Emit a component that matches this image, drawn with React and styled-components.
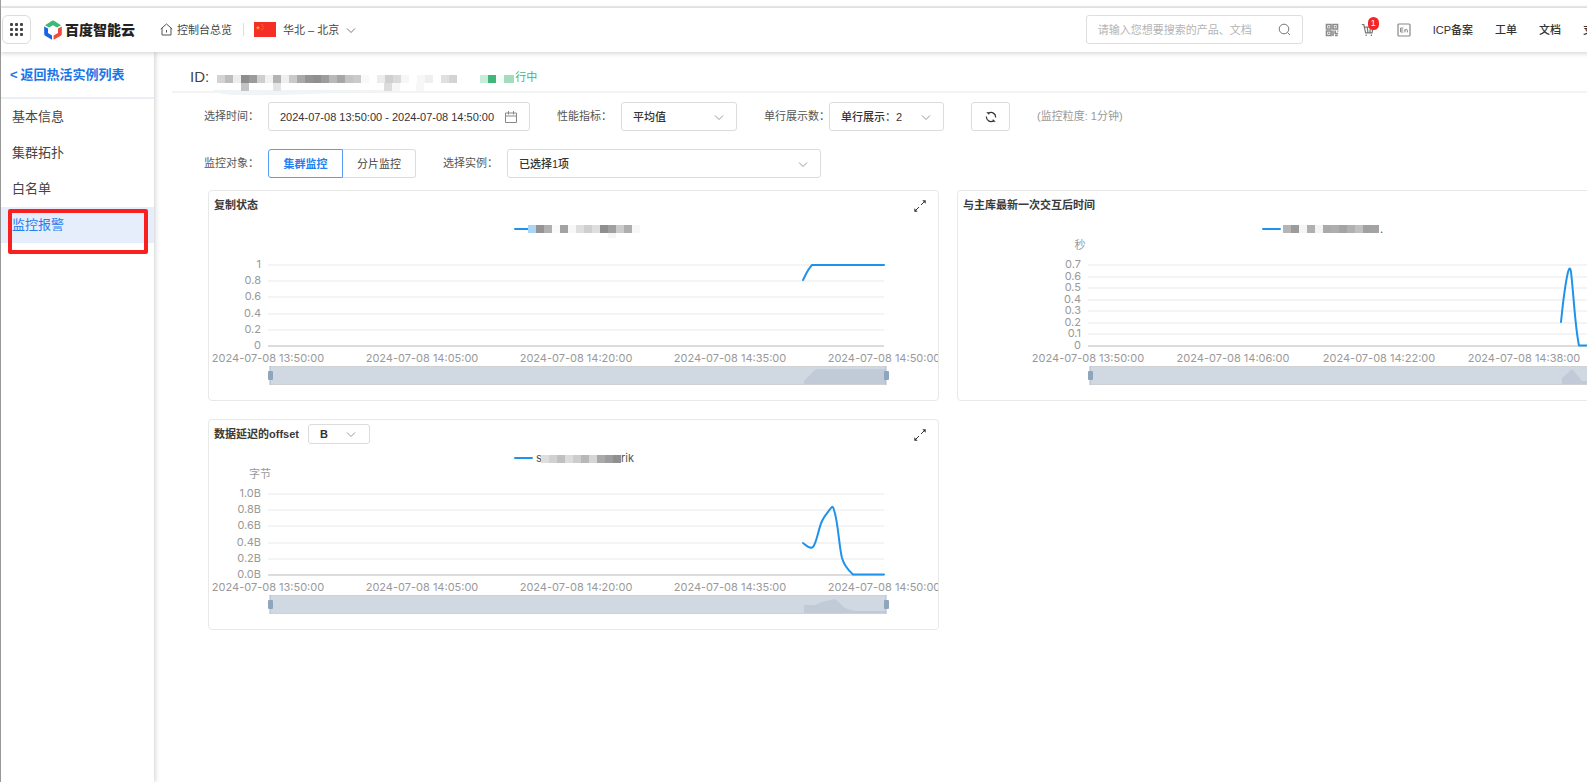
import React from "react";
import styled, { createGlobalStyle } from "styled-components";

const GlobalStyle = createGlobalStyle`
  *, *::before, *::after { box-sizing: border-box; }
  body {
    margin: 0;
    background: #fff;
    overflow-x: hidden;
    color: #444;
    font: 11px/16px "Liberation Sans", "Noto Sans CJK SC", sans-serif;
  }
  button, input, select { font: inherit; color: inherit; margin: 0; }
  a { color: inherit; text-decoration: none; }
`;

const Clip = styled.div`
  overflow: hidden;
`;

const Page = styled.div`
  display: flex;
  flex-direction: column;
  min-width: 1742px;
  min-height: 100vh;
  border-left: 1px solid #a0a0a0;
`;

const TopStrip = styled.div`
  height: 8px;
  border-bottom: 2px solid #ededed;
`;

const Header = styled.header`
  position: relative;
  z-index: 2;
  display: flex;
  align-items: center;
  height: 44px;
  padding: 0 137px 1px 1px;
  background: #fff;
  box-shadow: 0 1px 5px rgba(0, 0, 0, 0.2);
`;

const AppsButton = styled.button`
  display: grid;
  place-items: center;
  width: 29px;
  height: 29px;
  padding: 0;
  border: 1px solid #dcdcdc;
  border-radius: 6px;
  background: #fff;
`;

const Brand = styled.a`
  display: flex;
  align-items: center;
  gap: 2px;
  margin-left: 12px;
  color: #222;
  font-size: 14px;
  font-weight: 900;
`;

const HomeLink = styled.a`
  display: flex;
  align-items: center;
  gap: 4px;
  margin-left: 25px;
`;

const Divider = styled.span`
  width: 1px;
  height: 13px;
  margin: 0 10px 0 11px;
  background: #ddd;
`;

const RegionButton = styled.button`
  display: flex;
  align-items: center;
  gap: 7px;
  padding: 0;
  border: 0;
  background: none;
`;

const HeaderRight = styled.nav`
  display: flex;
  align-items: center;
  gap: 22px;
  margin-left: auto;
  color: #333;
  font-weight: 500;
`;

const SearchBox = styled.label`
  display: flex;
  align-items: center;
  width: 217px;
  height: 29px;
  padding: 0 11px;
  border: 1px solid #dedede;
  border-radius: 3px;
  font-weight: 400;
  input {
    flex: 1;
    min-width: 0;
    padding: 0;
    border: 0;
    outline: 0;
    background: none;
  }
  input::placeholder { color: #b4b4b4; opacity: 1; }
`;

const IconLink = styled.a`
  position: relative;
  display: flex;
  width: 14px;
  height: 14px;
`;

const Badge = styled.span`
  position: absolute;
  top: -6px;
  right: -4px;
  width: 11px;
  height: 13px;
  border-radius: 6px;
  background: #f32525;
  color: #fff;
  font-size: 9px;
  line-height: 13px;
  text-align: center;
`;

const Body = styled.div`
  display: flex;
  flex: 1;
`;

const Sidebar = styled.aside`
  position: relative;
  z-index: 1;
  width: 153px;
  box-shadow: 1px 0 5px rgba(0, 0, 0, 0.2);
  font-size: 13px;
  line-height: 20px;
`;

const BackLink = styled.a`
  display: flex;
  align-items: center;
  gap: 3px;
  height: 47px;
  padding-left: 9px;
  border-bottom: 2px solid #ebeef4;
  color: #1a75e8;
  font-weight: 700;
`;

const MenuItem = styled.a`
  display: flex;
  align-items: center;
  height: 36px;
  padding-left: 11px;
  background: ${(p) => (p.$active ? "#e6edfb" : "transparent")};
  color: ${(p) => (p.$active ? "#1f80f0" : "#444")};
`;

const MenuSlot = styled.div`
  position: relative;
`;

const Highlight = styled.span`
  position: absolute;
  top: 2px;
  left: 7px;
  width: 140px;
  height: 45px;
  border: 4px solid #fb2020;
  border-radius: 2px;
`;

const Main = styled.main`
  flex: 1;
  min-width: 0;
`;

const TitleBar = styled.div`
  display: flex;
  align-items: center;
  height: 41px;
  margin-left: 18px;
  padding: 10px 0 0 18px;
  border-bottom: 2px solid #f3f3f3;
  font-size: 15px;
`;

const Status = styled.span`
  color: #41b57a;
  font-size: 11px;
`;

const Controls = styled.div`
  display: flex;
  flex-direction: column;
  gap: 18px;
  padding: 9px 0 0 50px;
`;

const ControlRow = styled.div`
  display: flex;
  align-items: center;
  gap: 27px;
  height: 29px;
`;

const Field = styled.div`
  display: flex;
  align-items: center;
`;

const FieldLabel = styled.label`
  width: ${(p) => p.$width || 64}px;
  padding-bottom: 2px;
  white-space: nowrap;
  color: #555;
`;

const Control = styled.div`
  display: flex;
  align-items: center;
  width: ${(p) => p.$width}px;
  height: ${(p) => (p.$small ? 20 : 29)}px;
  border: 1px solid #dcdcdc;
  border-radius: 3px;
  background: #fff;
  color: #333;
  font-weight: ${(p) => (p.$small ? 700 : 500)};
  input, select {
    flex: 1;
    min-width: 0;
    height: 100%;
    padding: 0 0 0 11px;
    border: 0;
    outline: 0;
    background: none;
    appearance: none;
  }
  svg { flex: none; margin-right: ${(p) => (p.$small ? 13 : 12)}px; }
`;

const Segments = styled.div`
  display: flex;
`;

const Segment = styled.button`
  width: ${(p) => (p.$active ? 75 : 73)}px;
  height: 29px;
  padding: 0;
  border: 1px solid ${(p) => (p.$active ? "#5a9bf5" : "#dcdcdc")};
  border-left-width: ${(p) => (p.$active ? 1 : 0)}px;
  border-radius: ${(p) => (p.$active ? "3px 0 0 3px" : "0 3px 3px 0")};
  background: #fff;
  color: ${(p) => (p.$active ? "#1f80f0" : "#444")};
  font-weight: ${(p) => (p.$active ? 700 : 400)};
`;

const RefreshButton = styled.button`
  display: grid;
  place-items: center;
  width: 39px;
  height: 29px;
  padding: 0;
  border: 1px solid #dcdcdc;
  border-radius: 3px;
  background: #fff;
`;

const Hint = styled.span`
  padding-bottom: 2px;
  color: #999;
`;

const Cards = styled.section`
  display: grid;
  grid-template-columns: 1fr 1fr;
  gap: 18px;
  padding: 12px 54px 40px;
`;

const Card = styled.article`
  min-width: 0;
  border: 1px solid #e8e8e8;
  border-radius: 4px;
`;

const CardHead = styled.div`
  display: flex;
  align-items: center;
  gap: 9px;
  height: 28px;
  padding: 0 12px 0 5px;
`;

const CardTitle = styled.h2`
  margin: 0;
  color: #3a3a3a;
  font-size: 11px;
  font-weight: 700;
`;

const ExpandButton = styled.button`
  display: flex;
  margin-left: auto;
  padding: 2px 0 0;
  border: 0;
  background: none;
`;

const ChartSvg = styled.svg`
  display: block;
  width: 100%;
  height: auto;
  font-family: Inter, "Noto Sans CJK SC", sans-serif;
  font-size: 11px;
  fill: #999;
`;

const Blocks = styled.svg`
  display: block;
  overflow: visible;
`;

const Chevron = ({ color = "#999" }) => (
  <svg width="10" height="10" viewBox="0 0 10 10" fill="none" stroke={color}>
    <path d="M1 3.5 5 7.5 9 3.5" />
  </svg>
);

const HexLogo = () => (
  <svg width="20" height="20" viewBox="0 0 20 20">
    <path d="M2 5.2 9 .8Q10 .3 11 .8L18 5.2 14 7.6 10 5.2 6 7.6Z" fill="#3cb878" />
    <path d="M1.2 6.5 5 8.5V13L9 15.4V19.8L2.2 15.8Q1.2 15.2 1.2 14Z" fill="#1664e8" />
    <path d="M18.8 6.5 15 8.5V13L10.6 15.4V19.8L17.8 15.8Q18.8 15.2 18.8 14Z" fill="#f04a3a" />
  </svg>
);

const Flag = () => (
  <svg width="22" height="15" viewBox="0 0 22 15">
    <rect width="22" height="15" fill="#f52f26" />
    <path d="M4 3.2 4.6 4.9H6.4L5 6 5.5 7.7 4 6.7 2.5 7.7 3 6 1.6 4.9H3.4Z" fill="#f9a825" />
    <path d="M7.5 2.2h1v1h-1zM8.6 3.8h1v1h-1zM8.6 5.8h1v1h-1zM7.5 7.2h1v1h-1z" fill="#f6822a" />
  </svg>
);

const QrIcon = () => (
  <svg width="14" height="14" viewBox="0 0 14 14" fill="none" stroke="#8a8a8a">
    <path d="M1.5 1.5h4.5v4.5H1.5zM1.5 8h4.5v4.5H1.5zM8 1.5h4.5v4.5H8zM3 3.7h1.6M3 10.2h1.6M9.5 3.7h1.6M8 7.5v5.5M10.2 7.5v3h3M12.8 12.5H10M12.7 7.5v1" strokeWidth="1.6" />
  </svg>
);

const CartIcon = () => (
  <svg width="14" height="14" viewBox="0 0 14 14" fill="none" stroke="#777" strokeWidth="1.2">
    <path d="M.8 1.5H2.8L4.6 9.8H11L12.2 4.2H3.5M5.2 13V11.5M10.4 13V11.5M6.3 4.2 6.9 9.6M9.4 4.2 8.9 9.6" />
  </svg>
);

const EnIcon = () => (
  <svg width="14" height="14" viewBox="0 0 14 14" fill="none" stroke="#888">
    <rect x="1" y="1" width="12" height="12" rx="1" strokeWidth="1.2" />
    <path d="M6.4 5H3.6V9H6.4M3.6 7H6.2M8 9.4V6.2M8 7.6Q8.3 6.4 9.3 6.4 10.4 6.4 10.4 7.6V9.4" />
  </svg>
);

const ExpandIcon = () => (
  <svg width="12" height="12" viewBox="0 0 12 12" stroke="#333" fill="#333">
    <path d="M1 11 5 7M7 5 11 1" />
    <path d="M.3 8.3V11.7H3.7ZM8.3.3H11.7V3.7Z" stroke="none" />
  </svg>
);

/* Censored text: each entry is [x, y, width, height, colour]. */
const Mosaic = ({ cells }) =>
  cells.map(([x, y, w, h, c], i) => (
    <rect key={i} x={x} y={y} width={w} height={h} fill={c} shapeRendering="crispEdges" />
  ));

const row = (x, y, size, colors) => colors.map((c, i) => [x + i * size, y, size, size, c]);

const idCells = [
  ...row(8, 11, 8, ["#d3d3d3", "#bdbdbd", "#ededed", "#8d8d8d", "#9b9b9b", "#cfcfcf", "#f2f2f2", "#b3b3b3", "#efefef", "#c9c9c9", "#a9a9a9", "#949494", "#8f8f8f", "#9c9c9c", "#b8b8b8", "#a6a6a6", "#c4c4c4", "#cacaca", "#f9f9f9", "#ffffff", "#ececec", "#cfcfcf", "#dadada", "#f6f6f6", "#fff", "#f7f7f7", "#efefef", "#fff", "#e0e0e0", "#d3d3d3"]),
  [32, 19, 8, 8, "#c4c4c4"],
  [64, 19, 8, 8, "#e4e4e4"],
  [175, 19, 8, 8, "#dcdcdc"],
  [183, 19, 8, 8, "#f6f6f6"],
  [207, 19, 8, 8, "#f7f7f7"],
  [271, 11, 8, 8, "#c9ecd9"],
  [279, 11, 8, 8, "#41b57a"],
  [287, 11, 8, 8, "#f7fcf9"],
  [295, 11, 10, 8, "#a5dcc0"],
];

function Chart({ left, ticks, unit, unitX, times, curve, shade, legendX, legendWidth = 18, cells, before, after, afterX }) {
  const right = 675;
  const top = 45;
  const bottom = 126;
  const span = bottom - top;
  return (
    <ChartSvg viewBox="0 -1 729 181">
      <path d={`M${legendX} 9h${legendWidth}`} stroke="#1f93ec" strokeWidth="2" strokeLinecap="round" />
      {before && <text x="327" y="13" fill="#555">{before}</text>}
      <Mosaic cells={cells} />
      {after && <text x={afterX} y="13" fill="#555">{after}</text>}
      {unit && <text x={unitX} y="29" textAnchor="middle">{unit}</text>}
      {ticks.map((t, i) => {
        const y = Math.round(top + (span * i) / (ticks.length - 1));
        return (
          <g key={t}>
            <path d={`M${left} ${y}H${right}`} stroke={i === ticks.length - 1 ? "#dcdcdc" : "#f4f4f4"} strokeWidth="2" />
            <text x={left - 7} y={y + 3} textAnchor="end">{t}</text>
          </g>
        );
      })}
      {times.map(([x, t]) => (
        <text key={t} x={x} y="142" textAnchor="middle">{`2024-07-08 ${t}`}</text>
      ))}
      <path d={curve} fill="none" stroke="#1f93ec" strokeWidth="2" strokeLinecap="round" strokeLinejoin="round" />
      <rect x={left + 2} y="147" width={right - left} height="18" fill="#d0d9e2" />
      <path d={shade} fill="#c0cbd7" />
      <path d={`M${left + 2} 146.5H${right + 2}M${left + 2} 164.5H${right + 2}`} stroke="#cfd2d5" />
      {[left + 2, right + 2].map((x) => (
        <g key={x}>
          <path d={`M${x} 146V165`} stroke="#a9bacb" />
          <rect x={x - 2} y="151" width="5" height="9" rx="1" fill="#8fa5bd" />
        </g>
      ))}
    </ChartSvg>
  );
}

const quarterTimes = [
  [59, "13:50:00"],
  [213, "14:05:00"],
  [367, "14:20:00"],
  [521, "14:35:00"],
  [675, "14:50:00"],
];

const charts = [
  {
    title: "复制状态",
    left: 59,
    ticks: ["1", "0.8", "0.6", "0.4", "0.2", "0"],
    times: quarterTimes,
    curve: "M594 60C596 56 599 49 603 45H675",
    shade: "M595 164V161L607 149H677V164Z",
    legendX: 306,
    legendWidth: 13,
    cells: [
      ...row(319, 5, 8, ["#a9d6f5", "#949494", "#b0b0b0", "#fafafa", "#a3a3a3", "#f7f7f7", "#dedede", "#cfcfcf", "#dedede", "#8f8f8f", "#9f9f9f", "#cbcbcb", "#aeaeae", "#f7f7f7"]),
      [399, 13, 8, 5, "#f5f5f5"],
    ],
  },
  {
    title: "与主库最新一次交互后时间",
    left: 130,
    ticks: ["0.7", "0.6", "0.5", "0.4", "0.3", "0.2", "0.1", "0"],
    unit: "秒",
    unitX: 122,
    times: [
      [130, "13:50:00"],
      [275, "14:06:00"],
      [421, "14:22:00"],
      [566, "14:38:00"],
    ],
    curve: "M603 102C605 82 607 65 610 52Q612 45 613 52C616 78 617 107 621 125.5H675",
    shade: "M604 164V158L614 149 624 161H677V164Z",
    legendX: 305,
    legendWidth: 17,
    cells: row(325, 5, 8, ["#b5b5b5", "#9b9b9b", "#f5f5f5", "#b0b0b0", "#f4f4f4", "#aaaaaa", "#aeaeae", "#a4a4a4", "#b1b1b1", "#c0c0c0", "#a1a1a1", "#a4a4a4"]),
    after: ".",
    afterX: 422,
  },
  {
    title: "数据延迟的offset",
    select: true,
    left: 59,
    ticks: ["1.0B", "0.8B", "0.6B", "0.4B", "0.2B", "0.0B"],
    unit: "字节",
    unitX: 51,
    times: quarterTimes,
    curve: "M594 94C597 96 601 101 604 98C608 93 609 81 613 72C616 66 619 63 622 59Q624 56 625 61C629 72 630 97 633 109C635 116 639 121 644 125.5H675",
    shade: "M595 164V156H606L613 153 626 150 636 159 646 162H677V164Z",
    legendX: 306,
    legendWidth: 17,
    before: "s",
    cells: row(332, 6, 8, ["#dedede", "#d1d1d1", "#c0c0c0", "#dcdcdc", "#cdcdcd", "#b8b8b8", "#d6d6d6", "#a9a9a9", "#9d9d9d", "#909090"]),
    after: "rik",
    afterX: 412,
  },
];

export default function App() {
  return (
    <Clip>
      <GlobalStyle />
      <Page>
        <TopStrip />
        <Header>
          <AppsButton aria-label="全部产品">
            <svg width="13" height="13" viewBox="0 0 13 13" fill="#444">
              {[0, 5, 10].map((x) => [0, 5, 10].map((y) => <rect key={`${x}-${y}`} x={x} y={y} width="3" height="3" rx="1" />))}
            </svg>
          </AppsButton>
          <Brand href="#">
            <HexLogo />
            百度智能云
          </Brand>
          <HomeLink href="#">
            <svg width="13" height="13" viewBox="0 0 13 13" fill="none" stroke="#555">
              <path d="M.8 6 6.5 1 12.2 6M2 5V12H11V5M6.5 7V9.5" />
            </svg>
            控制台总览
          </HomeLink>
          <Divider />
          <RegionButton>
            <Flag />
            华北 – 北京
            <Chevron color="#777" />
          </RegionButton>
          <HeaderRight>
            <SearchBox>
              <input aria-label="搜索" placeholder="请输入您想要搜索的产品、文档" />
              <svg width="13" height="13" viewBox="0 0 13 13" fill="none" stroke="#777">
                <circle cx="6" cy="6" r="4.8" />
                <path d="M9.5 9.5 12 12" />
              </svg>
            </SearchBox>
            <IconLink href="#" aria-label="二维码"><QrIcon /></IconLink>
            <IconLink href="#" aria-label="购物车">
              <CartIcon />
              <Badge>1</Badge>
            </IconLink>
            <IconLink href="#" aria-label="语言"><EnIcon /></IconLink>
            <a href="#">ICP备案</a>
            <a href="#">工单</a>
            <a href="#">文档</a>
            <a href="#">支持</a>
          </HeaderRight>
        </Header>
        <Body>
          <Sidebar>
            <BackLink href="#"><span>&lt;</span>返回热活实例列表</BackLink>
            <MenuItem href="#">基本信息</MenuItem>
            <MenuItem href="#">集群拓扑</MenuItem>
            <MenuItem href="#">白名单</MenuItem>
            <MenuSlot>
              <MenuItem href="#" $active>监控报警</MenuItem>
              <Highlight />
            </MenuSlot>
          </Sidebar>
          <Main>
            <TitleBar>
              ID:
              <Blocks width="306" height="26" viewBox="0 0 306 26">
                <path d="M4 26H200C140 27 100 32 30 31Q10 31 4 26Z" fill="#f0f4f6" />
                <Mosaic cells={idCells} />
              </Blocks>
              <Status>行中</Status>
            </TitleBar>
            <Controls>
              <ControlRow>
                <Field>
                  <FieldLabel htmlFor="range">选择时间：</FieldLabel>
                  <Control $width={262}>
                    <input id="range" defaultValue="2024-07-08 13:50:00 - 2024-07-08 14:50:00" />
                    <svg width="12" height="12" viewBox="0 0 12 12" fill="none" stroke="#888">
                      <path d="M.5 2H11.5V11.5H.5ZM.5 5H11.5M3.5 0V3.5M8.5 0V3.5" />
                    </svg>
                  </Control>
                </Field>
                <Field>
                  <FieldLabel htmlFor="metric">性能指标：</FieldLabel>
                  <Control $width={116}>
                    <select id="metric"><option>平均值</option></select>
                    <Chevron />
                  </Control>
                </Field>
                <Field>
                  <FieldLabel htmlFor="columns" $width={65}>单行展示数：</FieldLabel>
                  <Control $width={115}>
                    <select id="columns"><option>单行展示：2</option></select>
                    <Chevron />
                  </Control>
                </Field>
                <RefreshButton aria-label="刷新">
                  <svg width="12" height="12" viewBox="0 0 12 12" fill="none" stroke="#333" strokeWidth="1.2">
                    <path d="M3.5 2.2A4.6 4.6 0 0 1 10.6 6.5M8.5 9.8A4.6 4.6 0 0 1 1.4 5.5" />
                    <path d="M1.2 1.2H4.2V4ZM10.8 10.8H7.8V8Z" fill="#333" stroke="none" />
                  </svg>
                </RefreshButton>
                <Hint>(监控粒度: 1分钟)</Hint>
              </ControlRow>
              <ControlRow>
                <Field>
                  <FieldLabel as="span">监控对象：</FieldLabel>
                  <Segments>
                    <Segment $active>集群监控</Segment>
                    <Segment>分片监控</Segment>
                  </Segments>
                </Field>
                <Field>
                  <FieldLabel htmlFor="instance">选择实例：</FieldLabel>
                  <Control $width={314}>
                    <select id="instance"><option>已选择1项</option></select>
                    <Chevron />
                  </Control>
                </Field>
              </ControlRow>
            </Controls>
            <Cards>
              {charts.map(({ title, select, ...chart }) => (
                <Card key={title}>
                  <CardHead>
                    <CardTitle>{title}</CardTitle>
                    {select && (
                      <Control $width={62} $small>
                        <select aria-label="单位"><option>B</option></select>
                        <Chevron />
                      </Control>
                    )}
                    <ExpandButton aria-label="放大"><ExpandIcon /></ExpandButton>
                  </CardHead>
                  <Chart {...chart} />
                </Card>
              ))}
            </Cards>
          </Main>
        </Body>
      </Page>
    </Clip>
  );
}
